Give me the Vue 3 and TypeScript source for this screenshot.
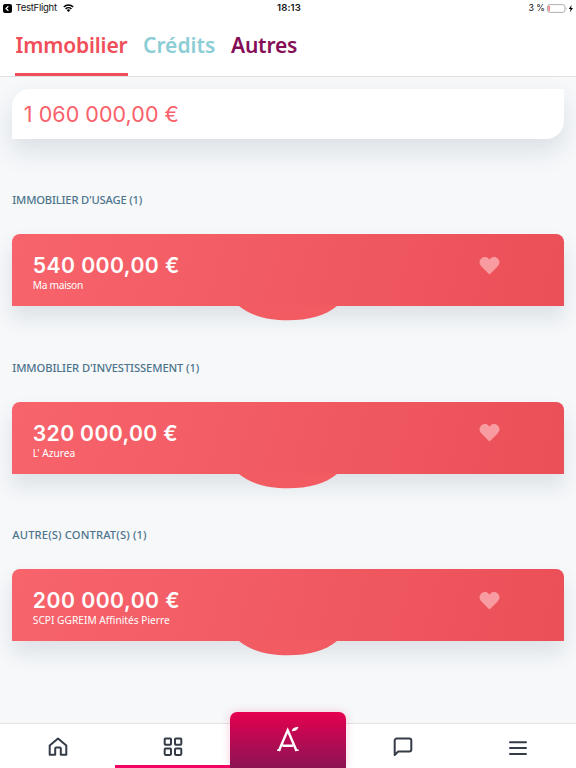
<script setup lang="ts">
interface Tab { label: string; tone: string }
interface Asset { id: string; title: string; amount: string; name: string }

const tabs: Tab[] = [
  { label: 'Immobilier', tone: 'coral' },
  { label: 'Crédits', tone: 'teal' },
  { label: 'Autres', tone: 'plum' },
]

const assets: Asset[] = [
  { id: 'usage', title: "IMMOBILIER D'USAGE (1)", amount: '540 000,00 €', name: 'Ma maison' },
  { id: 'invest', title: "IMMOBILIER D'INVESTISSEMENT (1)", amount: '320 000,00 €', name: "L' Azurea" },
  { id: 'other', title: 'AUTRE(S) CONTRAT(S) (1)', amount: '200 000,00 €', name: 'SCPI GGREIM Affinités Pierre' },
]
</script>

<template>
  <div class="screen">
    <div class="status">
      <div class="status-left">
        <svg class="back" viewBox="0 0 9 9"><rect width="9" height="9" rx="2" fill="#000" /><path d="M5.4 2.2 3 4.5l2.4 2.3" fill="none" stroke="#fff" stroke-width="1.2" /></svg>
        <span class="app">TestFlight</span>
        <svg class="wifi" viewBox="0 0 20 15"><path d="M1.500 5.500a12 12 0 0 1 17 0M4.700 8.900a7.500 7.500 0 0 1 10.600 0" fill="none" stroke="#000" stroke-width="2.700" /><path d="M10 14.500 6.800 11.200a4.500 4.500 0 0 1 6.400 0z" /></svg>
      </div>
      <span class="time">18:13</span>
      <div class="status-right">
        <span class="percent">3 %</span>
        <svg class="battery" viewBox="0 0 27 9">
          <rect x=".5" y=".6" width="17.500" height="7.800" rx="2.200" fill="none" stroke="#9a9a9a" stroke-width=".8" />
          <rect x="1.600" y="1.800" width="1" height="5.400" rx=".4" fill="#f33" />
          <path d="M19 3.200q1.200 1.300 0 2.600z" fill="#9a9a9a" />
          <path d="M24.600.9 21.800 5h1.800L22.900 8.200 26 4h-1.900z" />
        </svg>
      </div>
    </div>

    <nav class="tabs">
      <div v-for="t in tabs" :key="t.label" class="tab" :class="t.tone">{{ t.label }}</div>
    </nav>

    <main class="content">
      <div class="total"><span>1 060 000,00 €</span></div>
      <section v-for="a in assets" :key="a.id" class="group" :class="a.id">
        <h2>{{ a.title }}</h2>
        <article class="card">
          <div class="info">
            <div class="amount">{{ a.amount }}</div>
            <div class="name">{{ a.name }}</div>
          </div>
          <svg class="heart" viewBox="0 0 20 18"><path d="M10 17.500 1.500 9A5.200 5.200 0 0 1 1.500 1.700C3.800-.5 7.400-.3 9.200 1.700L10 2.500l.8-.8C12.600-.3 16.200-.5 18.500 1.700A5.200 5.200 0 0 1 18.500 9z" fill="#f89ca1" /></svg>
          <svg class="bump" viewBox="0 0 100 16"><path d="M0 0 1 1C12 10.500 30 15.300 50 15.300S88 10.500 99 1L100 0z" fill="#f35b63" /></svg>
        </article>
      </section>
    </main>

    <footer class="bar">
      <div class="item">
        <svg viewBox="0 0 20 20"><path d="M1.700 8.500 10 1.500l8.300 7v9.300h-5.500v-6.300a1 1 0 0 0-1-1H8.200a1 1 0 0 0-1 1v6.300H1.700z" /></svg>
      </div>
      <div class="item current">
        <svg viewBox="0 0 20 20"><rect x="1.700" y="1.500" width="6.300" height="6.300" rx=".8" /><rect x="12" y="1.500" width="6.300" height="6.300" rx=".8" /><rect x="1.700" y="11.600" width="6.300" height="6.300" rx=".8" /><rect x="12" y="11.600" width="6.300" height="6.300" rx=".8" /></svg>
      </div>
      <div class="item brand">
        <svg class="logo" viewBox="0 0 22 26"><path d="M1.800 25 10.700 4.200 19.600 25M5.500 19.800h10.400" fill="none" stroke="#fff" stroke-width="2.400" /><path d="M0 23.600h3.400v1.500H0zM18.300 23.600h3.400v1.500h-3.400zM14.800 5.300C15 2 18 1.200 21.500.8 20.800 3.800 18.500 5.300 14.800 5.300z" fill="#fff" /></svg>
      </div>
      <div class="item">
        <svg viewBox="0 0 20 20"><path d="M1.700 18V3.500a2 2 0 0 1 2-2h12.600a2 2 0 0 1 2 2v9a2 2 0 0 1-2 2H5.200z" /></svg>
      </div>
      <div class="item menu">
        <svg viewBox="0 0 20 20"><path d="M2 3.300h16M2 9.100h16M2 14.900h16" /></svg>
      </div>
    </footer>
  </div>
</template>

<style>
body { margin: 0; }
</style>

<style scoped>
.screen { width: 576px; height: 768px; display: flex; flex-direction: column; overflow: hidden; background: #f6f8fa; font-family: "Noto Sans", "Open Sans", sans-serif; }
.status { height: 16px; flex: none; display: grid; grid-template-columns: 1fr auto 1fr; align-items: center; background: #fff; padding: 0 3px; font-family: Inter, sans-serif; font-size: 9.500px; line-height: 16px; color: #111; }
.status-left, .status-right { display: flex; align-items: center; }
.status-right { justify-content: flex-end; margin-right: -1px; }
.back { width: 9px; height: 9px; margin-right: 3.500px; }
.app { letter-spacing: -.25px; }
.wifi { width: 11px; height: 8.300px; margin-left: 6px; }
.time { font-weight: 600; letter-spacing: .15px; padding-left: 2px; }
.percent { font-size: 8.800px; margin-right: 2px; }
.battery { width: 27px; height: 9px; }

.tabs { height: 60px; flex: none; display: flex; gap: 15px; padding: 0 15px; background: #fff; border-bottom: 1px solid #dfe1e3; }
.tab { box-sizing: border-box; height: 60px; line-height: 58px; font-size: 21px; font-weight: 600; white-space: nowrap; }
.coral { color: #f04e58; width: 113px; letter-spacing: -.15px; text-indent: .6px; border-bottom: 3px solid #f04e58; }
.teal { color: #8ccdd6; width: 73px; }
.plum { color: #850e56; letter-spacing: -.2px; }

.content { flex: 1; padding: 11.600px 12.300px 0; min-height: 0; }
.total { box-sizing: border-box; height: 50px; padding-left: 11.500px; line-height: 50px; background: #fff; border-radius: 18px 0 18px 0; box-shadow: 0 12px 24px rgba(70, 90, 105, .15); color: #f9616a; font-family: Inter, sans-serif; font-size: 21.500px; letter-spacing: .04px; white-space: nowrap; }
.group { height: 167.500px; }
.group:first-of-type { margin-top: 52.700px; }
h2 { margin: 0; height: 43px; line-height: 18px; font-size: 11.200px; font-weight: 500; color: #4d748c; white-space: nowrap; }
.usage h2 { letter-spacing: -.18px; }
.invest h2 { letter-spacing: -.1px; }
.other h2 { letter-spacing: .14px; }
.card { position: relative; box-sizing: border-box; height: 72px; display: flex; justify-content: space-between; padding: 17px 64px 0 20.500px; border-radius: 8px 8px 0 0; background: linear-gradient(105deg, #f8646c 0%, #f15a62 50%, #eb4f58 100%); box-shadow: 0 12px 20px rgba(70, 90, 105, .14); color: #fff; }
.amount { font-family: Inter, sans-serif; font-size: 21.200px; letter-spacing: .42px; line-height: 28px; font-weight: 600; white-space: nowrap; }
.invest .amount { letter-spacing: .33px; }
.other .amount { letter-spacing: .48px; }
.name { font-size: 10.200px; line-height: 13px; white-space: nowrap; }
.usage .name { letter-spacing: -.3px; }
.heart { width: 21px; height: 18px; margin-top: 5.400px; }
.bump { position: absolute; left: 50%; top: 71px; width: 100px; height: 16px; margin-left: -50px; }

.bar { position: relative; height: 44px; flex: none; display: grid; grid-template-columns: repeat(5, 1fr); background: #fff; border-top: 1px solid #e2e4e6; }
.item { display: flex; justify-content: center; align-items: center; padding-top: 1px; box-sizing: border-box; height: 45px; }
.item svg { width: 20px; height: 20px; fill: none; stroke: #343c47; stroke-width: 2; stroke-linecap: round; stroke-linejoin: round; }
.item.current { border-bottom: 4px solid #f20062; padding-top: 5px; }
.item.brand { height: 57px; margin-top: -12px; padding: 0 0 4px; border-radius: 7px 7px 0 0; background: linear-gradient(#e50050, #8a1455); box-shadow: 0 0 10px rgba(230, 0, 80, .2); }
.item .logo { width: 22px; height: 26px; stroke: none; stroke-linecap: butt; stroke-linejoin: miter; }
.item.menu { padding-top: 5px; }
</style>
